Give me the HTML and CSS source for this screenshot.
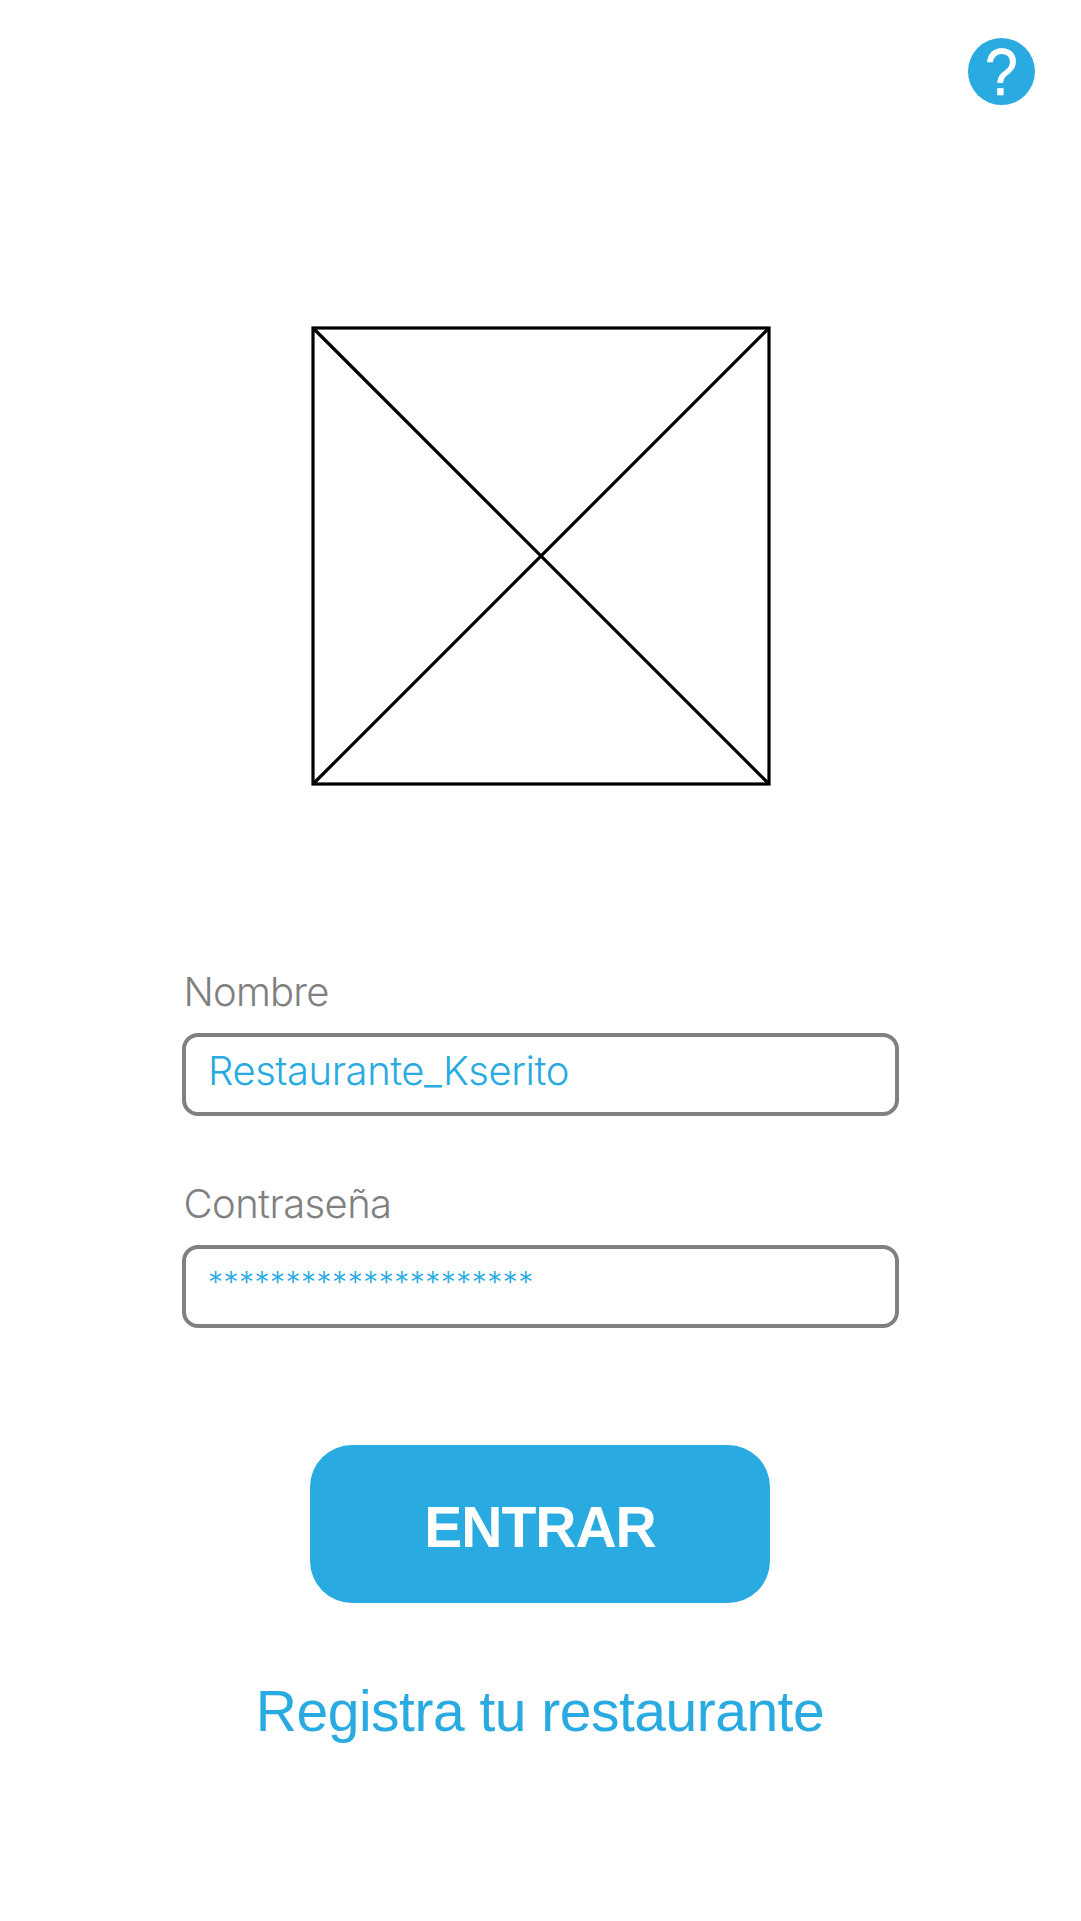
FILE: index.html
```html
<!DOCTYPE html>
<html lang="es">
<head>
<meta charset="utf-8">
<title>Acceso restaurante</title>
<link rel="stylesheet" href="styles.css">
</head>
<body>
<main class="screen">
  <header class="topbar">
    <a class="help" aria-label="Ayuda"><span class="help-mark">?</span></a>
  </header>
  <svg class="logo" viewBox="0 0 460 460" aria-hidden="true">
    <rect x="2" y="2" width="456" height="456"/>
    <path d="M2 2 458 458M458 2 2 458"/>
  </svg>
  <form class="form">
    <div class="field">
      <label class="label label-name">Nombre</label>
      <div class="box"><span class="value value-name">Restaurante_Kserito</span></div>
    </div>
    <div class="field">
      <label class="label label-pass">Contraseña</label>
      <div class="box"><span class="value value-pass">*********************</span></div>
    </div>
  </form>
  <div class="submit"><span class="submit-text">ENTRAR</span></div>
  <a class="register">Registra tu restaurante</a>
</main>
</body>
</html>
```
FILE: styles.css
```css
body {
  margin: 0;
  background: #fff;
  font-family: "Liberation Sans", Arial, sans-serif;
}
.screen {
  display: flex;
  flex-direction: column;
  align-items: center;
  width: 1080px;
  height: 1921px;
  overflow: hidden;
  white-space: nowrap;
}
.topbar {
  display: flex;
  justify-content: flex-end;
  align-self: stretch;
  padding: 38px 45px 0 0;
}
.help {
  display: flex;
  justify-content: center;
  width: 67px;
  height: 67px;
  border-radius: 50%;
  background: #29abe2;
  color: #fff;
}
.help-mark {
  font-size: 66px;
  line-height: 68px;
  transform: scaleX(0.89);
  -webkit-text-stroke: 0.6px #fff;
}
.logo {
  width: 460px;
  height: 460px;
  margin-top: 221px;
  margin-left: 1px;
  fill: none;
  stroke: #000;
  stroke-width: 3.2;
}
.form {
  display: flex;
  flex-direction: column;
  gap: 64px;
  width: 717px;
  margin-top: 182px;
  margin-left: 1px;
}
.field {
  display: flex;
  flex-direction: column;
  height: 148px;
}
.label {
  height: 65px;
  padding-left: 1.5px;
  color: #808080;
  font-family: Inter, sans-serif;
  font-weight: 300;
  font-size: 40px;
  line-height: 48px;
}
.label-name {
  letter-spacing: -0.8px;
}
.label-pass {
  letter-spacing: -0.6px;
}
.box {
  box-sizing: border-box;
  height: 83px;
  padding-left: 22px;
  border: 4px solid #808080;
  border-radius: 16px;
}
.value {
  color: #29abe2;
  font-family: Inter, sans-serif;
  font-weight: 300;
  font-size: 40px;
  line-height: 67px;
}
.value-name {
  letter-spacing: -0.45px;
}
.value-pass {
  font-size: 30px;
  letter-spacing: 0.5px;
}
.submit {
  display: flex;
  justify-content: center;
  width: 460px;
  height: 158px;
  margin-top: 117px;
  border-radius: 42px;
  background: #29abe2;
  color: #fff;
}
.submit-text {
  font-weight: 700;
  font-size: 57px;
  letter-spacing: -1px;
  line-height: 164px;
}
.register {
  margin-top: 74px;
  color: #29abe2;
  font-size: 57px;
  letter-spacing: -0.5px;
  line-height: 68px;
}
```
